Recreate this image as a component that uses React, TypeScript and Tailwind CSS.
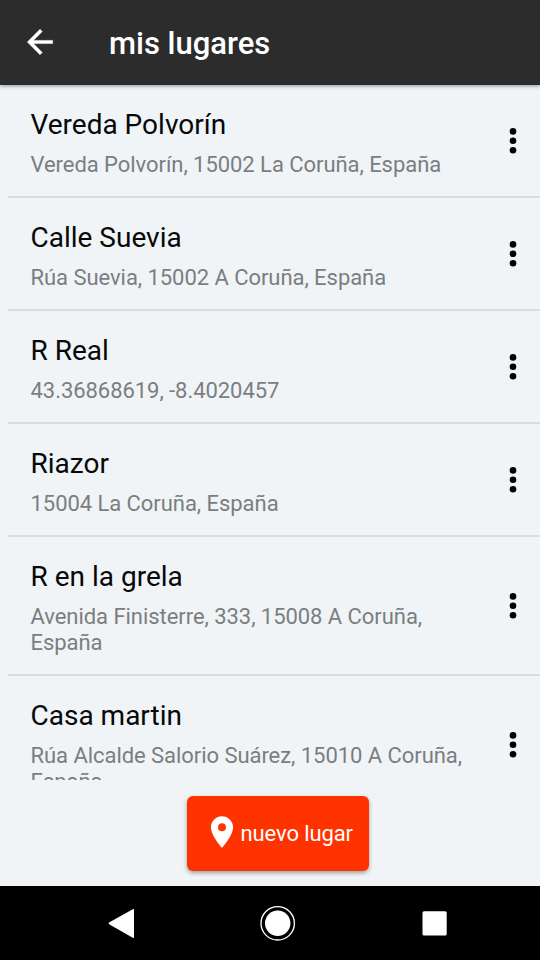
type Place = { name: string; address: string };

const places: Place[] = [
  { name: 'Vereda Polvorín', address: 'Vereda Polvorín, 15002 La Coruña, España' },
  { name: 'Calle Suevia', address: 'Rúa Suevia, 15002 A Coruña, España' },
  { name: 'R Real', address: '43.36868619, -8.4020457' },
  { name: 'Riazor', address: '15004 La Coruña, España' },
  { name: 'R en la grela', address: 'Avenida Finisterre, 333, 15008 A Coruña, España' },
  { name: 'Casa martin', address: 'Rúa Alcalde Salorio Suárez, 15010 A Coruña, España' },
];

function Header() {
  return (
    <header className="z-10 flex h-[85px] shrink-0 items-center bg-[#2c2c2c] pl-[21px] text-white shadow-[0_1px_4px_rgba(0,0,0,0.4)]">
      <button aria-label="Atrás" className="-mt-0.5 block">
        <svg width="38" height="38" viewBox="0 0 24 24" fill="currentColor" stroke="currentColor" strokeWidth="0.3">
          <path d="M20 11H7.83l5.59-5.59L12 4l-8 8 8 8 1.41-1.41L7.83 13H20v-2z" />
        </svg>
      </button>
      <h1 className="ml-[50px] pt-0.5 text-[31px] leading-9 font-medium">mis lugares</h1>
    </header>
  );
}

function PlaceRow({ place }: { place: Place }) {
  return (
    <li className="ml-2 flex items-center border-b-2 border-[#d9dde0] pl-[22.5px]">
      <div className="w-[440px] pt-6 pb-[18px]">
        <h2 className="text-[28px] leading-8 text-[#080808]">{place.name}</h2>
        <p className="mt-[11px] text-[22px] leading-[26px] tracking-[-0.05px] text-[#7b7e80]">{place.address}</p>
      </div>
      <button aria-label="Opciones" className="mr-[21px] ml-auto">
        <svg width="12" height="28" viewBox="0 0 12 28">
          <circle cx="6" cy="4.4" r="3.3" />
          <circle cx="6" cy="13.8" r="3.3" />
          <circle cx="6" cy="23.2" r="3.3" />
        </svg>
      </button>
    </li>
  );
}

function NavBar() {
  return (
    <nav className="h-[74px] shrink-0 bg-black">
      <svg width="540" height="74" viewBox="0 0 540 74" fill="white">
        <path d="M109.5 36.2 132.8 23.2q1.2-.6 1.2.7v27.2q0 1.3-1.2.7L109.5 38.4q-1.8-1.1 0-2.2z" />
        <circle cx="277.7" cy="37.3" r="16.7" fill="none" stroke="white" strokeWidth="1.3" />
        <circle cx="277.7" cy="37.3" r="12.7" />
        <rect x="422.5" y="25.3" width="24.2" height="24.2" rx="1.5" />
      </svg>
    </nav>
  );
}

export default function App() {
  return (
    <div className="flex h-[960px] w-[540px] flex-col overflow-hidden bg-[#f0f4f7] font-[Roboto,sans-serif]">
      <Header />
      <ul className="h-[695px] shrink-0 overflow-hidden">
        {places.map((place) => (
          <PlaceRow key={place.name} place={place} />
        ))}
      </ul>
      <div className="flex flex-1 justify-center pt-[15.5px] pl-4">
        <button className="flex h-[75px] w-[182px] items-center rounded-[6px] bg-[#ff3300] pl-[15.5px] text-white shadow-[0_2px_4px_rgba(0,0,0,0.35)]">
          <svg width="38" height="38" viewBox="0 0 24 24" fill="currentColor" className="-mt-0.5 shrink-0">
            <path d="M12 2C8.13 2 5 5.13 5 9c0 5.25 7 13 7 13s7-7.75 7-13c0-3.87-3.13-7-7-7zm0 9.5a2.5 2.5 0 0 1 0-5 2.5 2.5 0 0 1 0 5z" />
          </svg>
          <span className="text-[22px] tracking-[-0.1px] whitespace-nowrap">nuevo lugar</span>
        </button>
      </div>
      <NavBar />
    </div>
  );
}
